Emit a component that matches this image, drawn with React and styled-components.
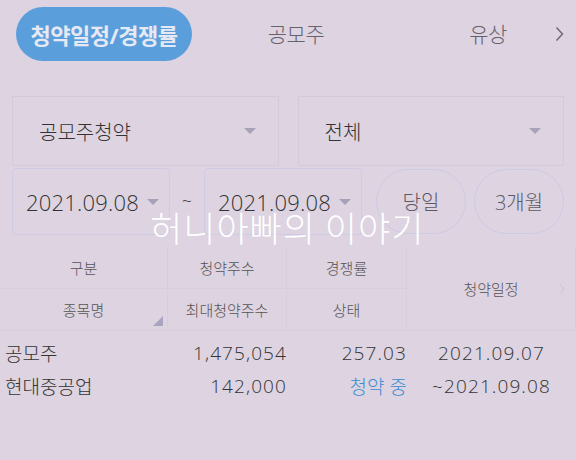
import React from "react";
import styled, { createGlobalStyle } from "styled-components";

const Global = createGlobalStyle`
  html, body {
    margin: 0;
    padding: 0;
    background: #ddd3e1;
  }
  body {
    font-family: "Open Sans", "Noto Sans CJK KR", sans-serif;
    font-weight: 300;
    color: #333;
  }
`;

const Page = styled.div`
  position: relative;
  width: 576px;
  height: 460px;
  overflow: hidden;
  background: #ddd3e1;
`;

const TabBar = styled.div`
  position: relative;
  display: grid;
  grid-template-columns: 176px 208px 176px;
  align-items: center;
  padding: 7px 0 0 16px;
  height: 54px;
`;

const Tab = styled.div`
  display: flex;
  align-items: center;
  justify-content: center;
  height: 54px;
  font-size: ${(p) => (p.$active ? "22px" : "21px")};
  font-weight: ${(p) => (p.$active ? 700 : 300)};
  color: ${(p) => (p.$active ? "#e6e9f3" : "#66626c")};
  background: ${(p) => (p.$active ? "#5a9fdc" : "transparent")};
  border-radius: 27px;
  letter-spacing: -0.5px;
  padding-bottom: ${(p) => (p.$active ? "0" : "3px")};
  box-sizing: border-box;
`;

const TabArrow = styled.svg`
  position: absolute;
  right: 12px;
  top: 26px;
`;

const SelectRow = styled.div`
  display: flex;
  gap: 19px;
  padding: 35px 12px 0 12px;
`;

const Select = styled.div`
  flex: 1;
  height: 70px;
  display: flex;
  align-items: center;
  justify-content: space-between;
  padding: 0 22px 0 26px;
  border: 1px solid rgba(200, 192, 215, 0.45);
  box-sizing: border-box;
  font-size: 20px;
  color: #333;
`;

const Caret = styled.span`
  width: 0;
  height: 0;
  border-left: 6px solid transparent;
  border-right: 6px solid transparent;
  border-top: 6px solid #a8a2b8;
`;

const DateRow = styled.div`
  display: flex;
  align-items: center;
  padding: 2px 12px 0 12px;
`;

const DateBox = styled.div`
  width: 158px;
  height: 67px;
  display: flex;
  align-items: center;
  justify-content: space-between;
  padding: 0 10px 0 13px;
  box-sizing: border-box;
  border: 1px solid #cfcbe6;
  border-radius: 4px;
  font-size: 22px;
  color: #333;
  letter-spacing: 0.2px;
`;

const Tilde = styled.div`
  width: 34px;
  text-align: center;
  font-size: 18px;
  color: #444;
  padding-bottom: 4px;
`;

const RangeButton = styled.div`
  width: 90px;
  height: 65px;
  margin-left: ${(p) => p.$gap}px;
  display: flex;
  align-items: center;
  justify-content: center;
  border: 1px solid #cdcae6;
  border-radius: 33px;
  box-sizing: border-box;
  font-size: 20px;
  color: #5c5866;
`;

const Watermark = styled.div`
  position: absolute;
  left: 150px;
  top: 201px;
  font-family: "Noto Sans CJK KR", sans-serif;
  font-size: 35px;
  font-weight: 300;
  color: #ffffff;
  letter-spacing: 1px;
  pointer-events: none;
`;

const Header = styled.div`
  display: grid;
  grid-template-columns: 168px 119px 120px 169px;
  grid-template-rows: 42px 42px;
  margin-top: 12px;
  font-size: 15px;
  color: #555;
`;

const HeadCell = styled.div`
  position: relative;
  display: flex;
  align-items: center;
  justify-content: center;
  border-right: 1px solid rgba(200, 192, 215, 0.3);
  border-bottom: 1px solid rgba(200, 192, 215, 0.3);
  grid-column: ${(p) => p.$col || "auto"};
  grid-row: ${(p) => p.$row || "auto"};
`;

const Corner = styled.span`
  position: absolute;
  right: 4px;
  bottom: 4px;
  width: 0;
  height: 0;
  border-left: 10px solid transparent;
  border-bottom: 10px solid #aaa5bf;
`;

const SideArrow = styled.svg`
  position: absolute;
  right: 10px;
  top: 50%;
  transform: translateY(-50%);
`;

const DataList = styled.div`
  padding-top: 5px;
`;

const DataRow = styled.div`
  display: grid;
  grid-template-columns: 168px 119px 120px 169px;
  height: 33px;
  align-items: center;
  font-size: 19px;
  color: #333;
`;

const Cell = styled.div`
  text-align: ${(p) => p.$align || "right"};
  padding-left: ${(p) => (p.$align === "left" ? "5px" : "0")};
  letter-spacing: ${(p) => (p.$num ? "1.1px" : "0")};
  color: ${(p) => (p.$blue ? "#3a8cd2" : "inherit")};
`;

const rows = [
  ["공모주", "1,475,054", "257.03", "2021.09.07", false],
  ["현대중공업", "142,000", "청약 중", "~2021.09.08", true],
];

export default function App() {
  return (
    <Page>
      <Global />
      <TabBar>
        <Tab $active>청약일정/경쟁률</Tab>
        <Tab>공모주</Tab>
        <Tab>유상</Tab>
        <TabArrow width="9" height="16" viewBox="0 0 9 16">
          <path d="M1.5 1.5 L7.5 8 L1.5 14.5" fill="none" stroke="#6a6670" strokeWidth="1.4" />
        </TabArrow>
      </TabBar>

      <SelectRow>
        <Select>
          공모주청약
          <Caret />
        </Select>
        <Select>
          전체
          <Caret />
        </Select>
      </SelectRow>

      <DateRow>
        <DateBox>
          2021.09.08
          <Caret />
        </DateBox>
        <Tilde>~</Tilde>
        <DateBox>
          2021.09.08
          <Caret />
        </DateBox>
        <RangeButton $gap={14}>당일</RangeButton>
        <RangeButton $gap={8}>3개월</RangeButton>
      </DateRow>

      <Watermark>허니아빠의 이야기</Watermark>

      <Header>
        <HeadCell>구분</HeadCell>
        <HeadCell>청약주수</HeadCell>
        <HeadCell>경쟁률</HeadCell>
        <HeadCell $col="4" $row="1 / span 2">
          청약일정
          <SideArrow width="6" height="11" viewBox="0 0 6 11">
            <path d="M1 1 L5 5.5 L1 10" fill="none" stroke="#c9c1d6" strokeWidth="1" />
          </SideArrow>
        </HeadCell>
        <HeadCell>
          종목명
          <Corner />
        </HeadCell>
        <HeadCell>최대청약주수</HeadCell>
        <HeadCell>상태</HeadCell>
      </Header>

      <DataList>
        {rows.map((r) => (
          <DataRow key={r[0]}>
            <Cell $align="left">{r[0]}</Cell>
            <Cell $num>{r[1]}</Cell>
            <Cell $num={!r[4]} $blue={r[4]}>{r[2]}</Cell>
            <Cell $num $align="center">{r[3]}</Cell>
          </DataRow>
        ))}
      </DataList>
    </Page>
  );
}
